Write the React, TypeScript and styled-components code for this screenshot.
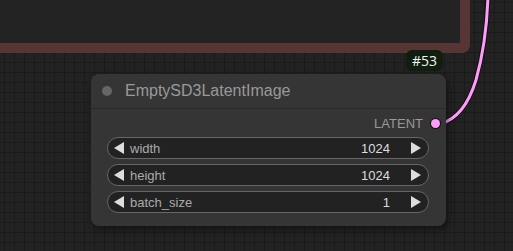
import styled, { createGlobalStyle } from 'styled-components';

const GlobalStyle = createGlobalStyle`
  html, body {
    margin: 0;
    padding: 0;
    background: #222;
  }
  body {
    font-family: "Liberation Sans", Arial, sans-serif;
  }
`;

const Canvas = styled.div`
  position: relative;
  width: 513px;
  height: 251px;
  overflow: hidden;
  background-color: #222;
  background-image:
    linear-gradient(to right, rgba(0, 0, 0, 0.22) 1px, transparent 1px),
    linear-gradient(to bottom, rgba(0, 0, 0, 0.22) 1px, transparent 1px);
  background-size: 10px 10px;
  background-position: 4px 2px;
`;

const GroupFrame = styled.div`
  position: absolute;
  left: -30px;
  top: -120px;
  width: 480px;
  height: 153px;
  background: #232323;
  border: 10px solid #573535;
  border-radius: 8px;
`;

const IdBadge = styled.div`
  position: absolute;
  left: 406px;
  top: 50px;
  height: 21px;
  padding: 0 6px;
  display: flex;
  align-items: center;
  background: #0f1e0f;
  border-radius: 6px;
  color: #f2f2f2;
  font-family: "Open Sans", "Noto Sans", sans-serif;
  font-size: 14px;
`;

const Wire = styled.svg`
  position: absolute;
  left: 0;
  top: 0;
  pointer-events: none;
`;

const Node = styled.div`
  position: absolute;
  left: 91px;
  top: 74px;
  width: 355px;
  height: 152px;
  box-sizing: border-box;
  background: #353535;
  border-radius: 8px;
  box-shadow: 2px 3px 6px rgba(0, 0, 0, 0.45);
  display: flex;
  flex-direction: column;
`;

const TitleBar = styled.div`
  height: 34px;
  display: flex;
  align-items: center;
  gap: 13px;
  padding-left: 11px;
  border-bottom: 1px solid #2b2b2b;
  color: #999;
  font-size: 16px;
`;

const TitleDot = styled.span`
  width: 10px;
  height: 10px;
  border-radius: 50%;
  background: #666;
`;

const OutputRow = styled.div`
  height: 28px;
  display: flex;
  align-items: center;
  justify-content: flex-end;
  gap: 8px;
  padding-right: 6px;
  color: #999;
  font-size: 13px;
`;

const Slot = styled.span<{ $color: string }>`
  width: 9px;
  height: 9px;
  border-radius: 50%;
  background: ${(p) => p.$color};
  box-shadow: 0 0 0 1px #111;
`;

const Widgets = styled.div`
  display: flex;
  flex-direction: column;
  gap: 5px;
  padding: 0 17px 0 16px;
`;

const Widget = styled.div`
  height: 22px;
  box-sizing: border-box;
  display: flex;
  align-items: center;
  padding: 0 7px 0 6px;
  background: #222;
  border: 1px solid #666;
  border-radius: 11px;
  font-size: 13px;
`;

const Arrow = styled.span<{ $dir: 'left' | 'right' }>`
  width: 0;
  height: 0;
  border-top: 6px solid transparent;
  border-bottom: 6px solid transparent;
  ${(p) =>
    p.$dir === 'left'
      ? 'border-right: 10px solid #ddd; margin-right: 6px;'
      : 'border-left: 10px solid #ddd; margin-left: 21px;'}
`;

const Label = styled.span`
  flex: 1;
  color: #aaa;
`;

const Value = styled.span`
  color: #ddd;
`;

const widgets = [
  { name: 'width', value: '1024' },
  { name: 'height', value: '1024' },
  { name: 'batch_size', value: '1' },
];

export default function App() {
  return (
    <>
      <GlobalStyle />
      <Canvas>
        <GroupFrame />
        <Wire width={513} height={251}>
          <path
            d="M440 124 C 455 120 468 106 476 80 C 483 55 487 28 488 -4"
            fill="none"
            stroke="#111"
            strokeWidth={5}
          />
          <path
            d="M440 124 C 455 120 468 106 476 80 C 483 55 487 28 488 -4"
            fill="none"
            stroke="#ff9cf9"
            strokeWidth={3}
          />
        </Wire>
        <IdBadge>#53</IdBadge>
        <Node>
          <TitleBar>
            <TitleDot />
            EmptySD3LatentImage
          </TitleBar>
          <OutputRow>
            LATENT
            <Slot $color="#ff9cf9" />
          </OutputRow>
          <Widgets>
            {widgets.map((w) => (
              <Widget key={w.name}>
                <Arrow $dir="left" />
                <Label>{w.name}</Label>
                <Value>{w.value}</Value>
                <Arrow $dir="right" />
              </Widget>
            ))}
          </Widgets>
        </Node>
      </Canvas>
    </>
  );
}
